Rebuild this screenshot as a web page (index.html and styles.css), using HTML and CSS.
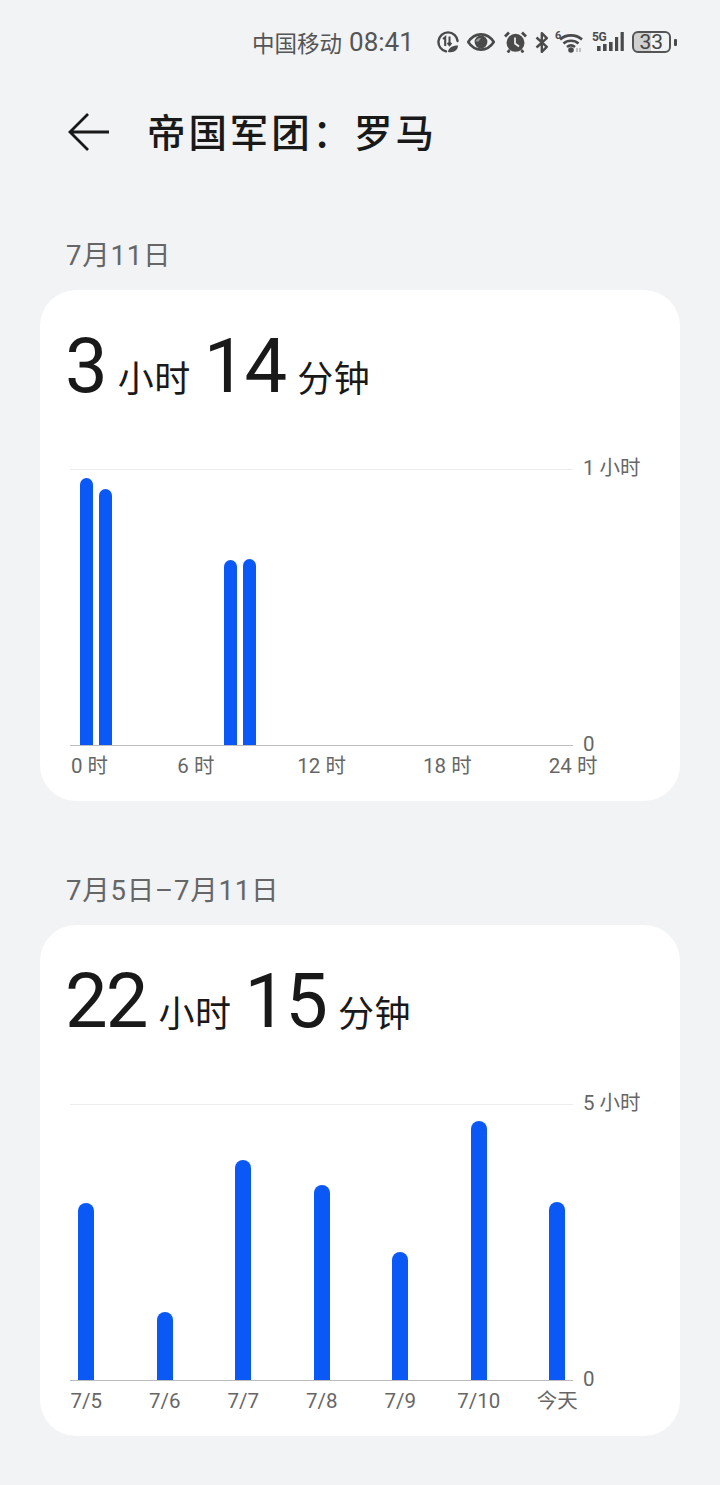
FILE: index.html
```html
<!DOCTYPE html>
<html>
  <head>
    <title>帝国军团&#xFF1A;罗马</title>
    <link rel="stylesheet" href="styles.css">
  </head>
  <body>
    <div class="status-bar">
      <span class="carrier">中国移动</span>
      <span class="clock">08:41</span>
      <div class="status-icons">
        <svg class="icon-data" width="22" height="22" viewBox="0 0 22 22">
          <path d="M9 20.400A9.600 9.600 0 1 1 20.600 10" fill="none" stroke="#4a4a4a" stroke-width="2.400" stroke-linecap="round"/>
          <path d="M6 8l2.200-1.800V15" fill="none" stroke="#4a4a4a" stroke-width="2.100"/>
          <path d="M12.500 5.500V14M10.600 11.800l1.900 2.400 1.900-2.400" fill="none" stroke="#4a4a4a" stroke-width="2"/>
          <path d="M11 21c.5-4 4-6.500 10-6.500-.2 4.500-3.500 7.500-10 6.500z" fill="#4a4a4a"/>
        </svg>
        <svg class="icon-eye" width="28" height="18" viewBox="0 0 28 18">
          <path d="M1.200 9C4.500 4 9 1.400 14 1.400S23.500 4 26.800 9C23.500 14 19 16.600 14 16.600S4.500 14 1.200 9z" fill="none" stroke="#4a4a4a" stroke-width="2.600"/>
          <circle cx="14" cy="9" r="6.400" fill="#4a4a4a"/>
          <path d="M8.500 8.500C9.500 5.800 12 4.600 14 5L11.500 8.500z" fill="#9a9a9a"/>
        </svg>
        <svg class="icon-alarm" width="23" height="22" viewBox="0 0 23 22">
          <circle cx="11.500" cy="11.800" r="9" fill="#4a4a4a"/>
          <path d="M1 5.500L5 1.500M22 5.500L18 1.500M5.500 19L3.800 21.500M17.500 19L19.200 21.500" stroke="#4a4a4a" stroke-width="2.800" fill="none"/>
          <path d="M11 6.500V12.500L15 15.500" fill="none" stroke="#f1f3f5" stroke-width="1.700"/>
        </svg>
        <svg class="icon-bt" width="14" height="21" viewBox="0 0 14 21">
          <path d="M1.500 5.500L11.800 14.800 6.800 19.800V1.200L11.800 6.200 1.500 15.500" fill="none" stroke="#4a4a4a" stroke-width="2.400" stroke-linejoin="round"/>
        </svg>
        <svg class="icon-wifi" width="31" height="24" viewBox="0 0 31 24">
          <text x="0" y="10" class="icon-label">6</text>
          <path d="M5 10.500C11 5 21 5 27 10.500M8.500 14.500C12.500 10.800 19.500 10.800 23.500 14.500M12 18C14.500 16 17.500 16 20 18" fill="none" stroke="#4a4a4a" stroke-width="2.600"/>
          <circle cx="16" cy="21" r="2.800" fill="#4a4a4a"/>
          <path d="M22 19v4M25 19v4" stroke="#b5b5b5" stroke-width="1.600"/>
        </svg>
        <svg class="icon-signal" width="32" height="22" viewBox="0 0 32 22">
          <text x="0" y="10" class="icon-label icon-label-5g">5G</text>
          <path d="M5 15h3.600v5H5zM11 13h3.600v7H11zM17 11h3.600v9H17zM23 6h3.200v14H23zM28.600 1h3.200v19h-3.200z" fill="#4a4a4a"/>
        </svg>
        <div class="battery">
          <div class="battery-body">33</div>
          <div class="battery-tip"></div>
        </div>
      </div>
    </div>

    <div class="title-bar">
      <svg class="back" width="42" height="38" viewBox="0 0 42 38">
        <path d="M41 19H2M20 1L2 19l18 18" fill="none" stroke="#191919" stroke-width="2.800"/>
      </svg>
      <h1>帝国军团&#xFF1A;罗马</h1>
    </div>

    <div class="date-label">7月11日</div>
    <div class="card">
      <div class="summary">
        <span class="big">3</span><span class="unit">小时</span><span class="big">14</span><span class="unit">分钟</span>
      </div>
      <div class="chart">
        <div class="plot day-plot">
          <div class="bar-pair">
            <div class="bar" style="height:267px"></div>
            <div class="bar" style="height:256px"></div>
          </div>
          <div class="bar-pair">
            <div class="bar" style="height:185px"></div>
            <div class="bar" style="height:186px"></div>
          </div>
        </div>
        <div class="y-axis">
          <span>1 小时</span>
          <span>0</span>
        </div>
      </div>
      <div class="x-axis day-axis">
        <span>0 时</span>
        <span>6 时</span>
        <span>12 时</span>
        <span>18 时</span>
        <span>24 时</span>
      </div>
    </div>

    <div class="date-label">7月5日&#x2013;7月11日</div>
    <div class="card">
      <div class="summary">
        <span class="big">22</span><span class="unit">小时</span><span class="big">15</span><span class="unit">分钟</span>
      </div>
      <div class="chart">
        <div class="plot week-plot">
          <div class="bar" style="height:177px"></div>
          <div class="bar" style="height:68px"></div>
          <div class="bar" style="height:220px"></div>
          <div class="bar" style="height:195px"></div>
          <div class="bar" style="height:128px"></div>
          <div class="bar" style="height:259px"></div>
          <div class="bar" style="height:178px"></div>
        </div>
        <div class="y-axis">
          <span>5 小时</span>
          <span>0</span>
        </div>
      </div>
      <div class="x-axis week-axis">
        <span>7/5</span>
        <span>7/6</span>
        <span>7/7</span>
        <span>7/8</span>
        <span>7/9</span>
        <span>7/10</span>
        <span>今天</span>
      </div>
    </div>
  </body>
</html>
```
FILE: styles.css
```css
body {
  margin: 0;
  height: 1485px;
  overflow: hidden;
  background: #f1f3f5;
  font-family: Roboto, "Noto Sans CJK SC", sans-serif;
  color: #191919;
}
.status-bar {
  height: 84px;
  display: flex;
  align-items: center;
  padding-left: 252px;
  color: #555;
}
.carrier {
  font-size: 22.500px;
}
.clock {
  font-size: 26px;
  margin-left: 7px;
}
.status-icons {
  display: flex;
  align-items: center;
  margin-left: 23px;
}
.icon-eye {
  margin-left: 8px;
}
.icon-alarm {
  margin-left: 9px;
}
.icon-bt {
  margin-left: 8px;
}
.icon-wifi {
  margin-left: 6px;
  margin-top: -2px;
}
.icon-signal {
  margin-left: 6px;
}
.icon-label {
  font-family: Roboto, sans-serif;
  font-size: 11px;
  font-weight: 700;
  fill: #4a4a4a;
}
.icon-label-5g {
  font-size: 12px;
  letter-spacing: -0.5px;
}
.battery {
  display: flex;
  align-items: center;
  margin-left: 8px;
}
.battery-body {
  width: 39px;
  height: 22px;
  box-sizing: border-box;
  border: 2px solid #555;
  border-radius: 6px;
  background: linear-gradient(90deg, #d0d0d0 0 50%, transparent 50%);
  font-size: 21px;
  line-height: 18px;
  text-align: center;
  color: #444;
}
.battery-tip {
  width: 3px;
  height: 7px;
  margin-left: 3px;
  background: #4a4a4a;
  border-radius: 1px;
}
.title-bar {
  height: 96px;
  display: flex;
  align-items: center;
  padding-left: 68px;
}
h1 {
  margin: 0 0 5px 37px;
  font-size: 38.500px;
  letter-spacing: 2.900px;
  font-weight: 500;
  color: #191919;
}
.date-label {
  margin: 59px 0 17px 66px;
  font-size: 27.500px;
  letter-spacing: 0.800px;
  line-height: 34px;
  color: #666;
}
.card {
  width: 640px;
  height: 511px;
  margin-left: 40px;
  background: #fff;
  border-radius: 36px;
  overflow: hidden;
}
.card + .date-label {
  margin-top: 73px;
}
.summary {
  margin: 28px 0 55px 25px;
  height: 96px;
  line-height: 96px;
  white-space: nowrap;
}
.big {
  font-size: 76px;
  letter-spacing: -2px;
}
.unit {
  font-size: 36px;
  letter-spacing: 0.500px;
  margin: 0 13px 0 12px;
}
.chart {
  display: flex;
  padding-left: 30px;
}
.plot {
  width: 503px;
  height: 277px;
  box-sizing: border-box;
  border-top: 1px solid #ececec;
  border-bottom: 1px solid #bdbdbd;
  display: flex;
  align-items: flex-end;
}
.day-plot {
  padding-left: 10px;
  gap: 112.700px;
}
.bar-pair {
  display: flex;
  align-items: flex-end;
  gap: 6.200px;
}
.day-plot .bar {
  width: 12.800px;
}
.week-plot {
  padding-left: 8.200px;
  gap: 62.500px;
}
.week-plot .bar {
  width: 16px;
}
.bar {
  background: #0a59f7;
  border-radius: 8px 8px 0 0;
}
.y-axis {
  display: flex;
  flex-direction: column;
  justify-content: space-between;
  margin: -12px 0 -9px 10px;
  font-size: 20.500px;
  line-height: 22px;
  color: #666;
  white-space: nowrap;
}
.x-axis {
  display: flex;
  font-size: 20.500px;
  line-height: 22px;
  margin-top: 9px;
  color: #666;
  white-space: nowrap;
}
.x-axis span {
  text-align: center;
}
.day-axis {
  margin-left: 31px;
}
.day-axis span {
  width: 125.750px;
}
.day-axis span:first-child {
  width: 62px;
  text-align: left;
}
.week-axis {
  margin-left: 7px;
}
.week-axis span {
  width: 78.500px;
}
```
